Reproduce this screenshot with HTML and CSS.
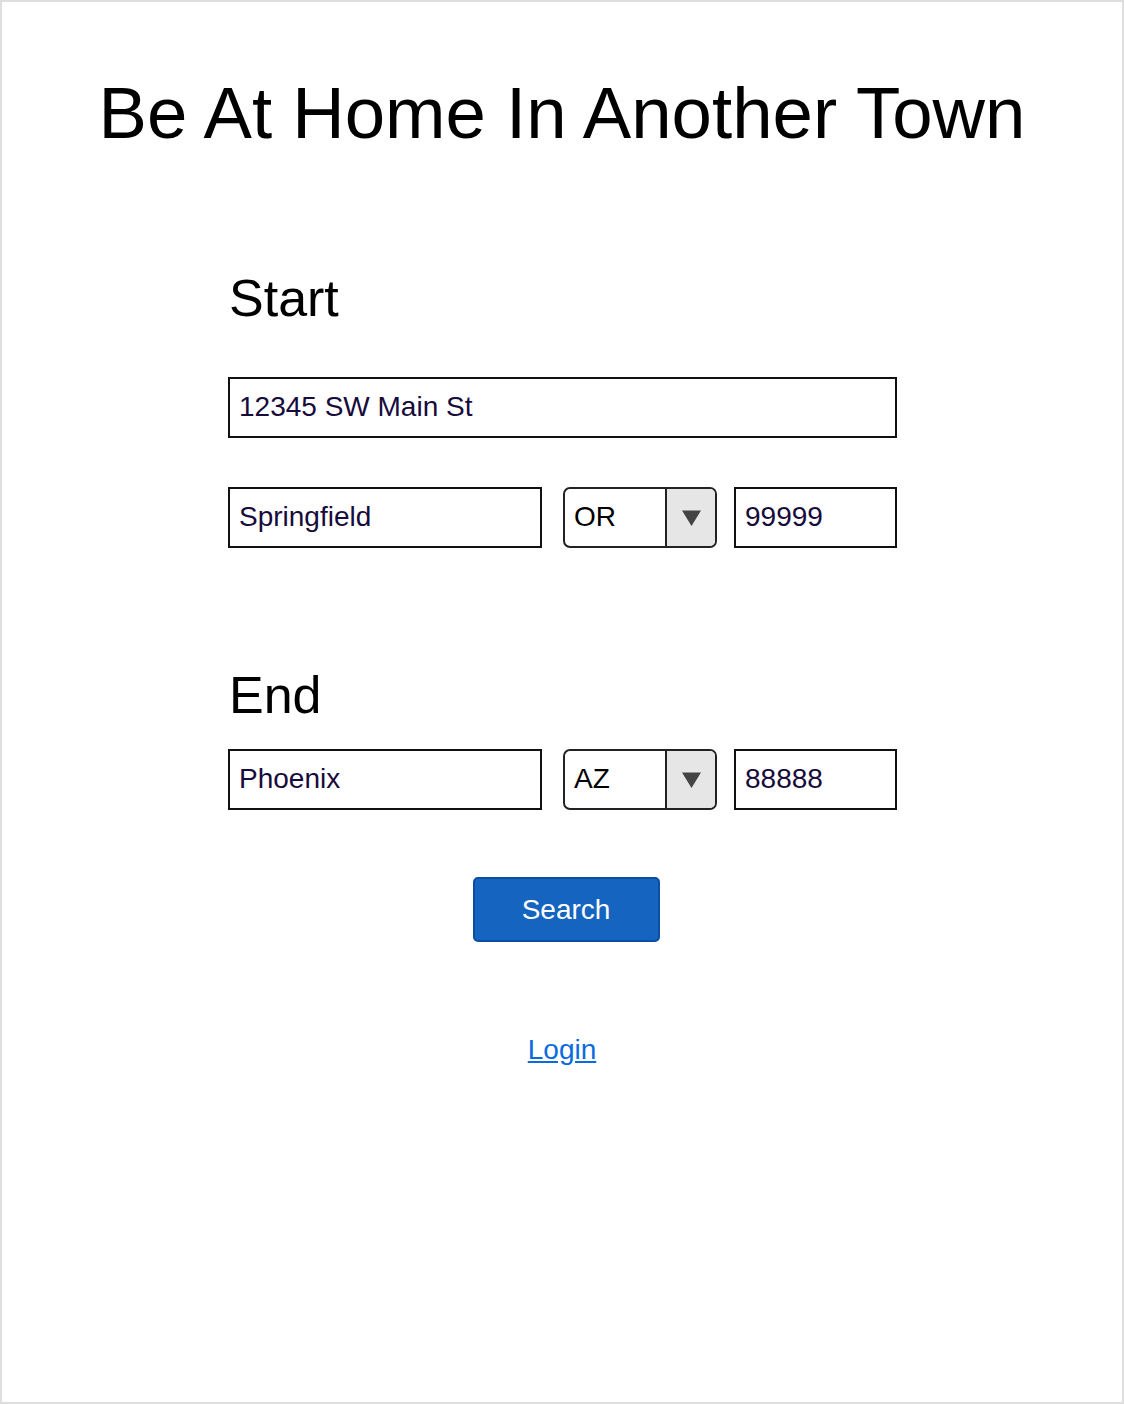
FILE: index.html
```html
<!DOCTYPE html>
<html lang="en">
<head>
<meta charset="utf-8">
<title>Be At Home In Another Town</title>
<link rel="stylesheet" href="styles.css">
</head>
<body>
<div class="page">
  <h1 class="title">Be At Home In Another Town</h1>
  <form class="form">
    <h2 class="section-title start-title">Start</h2>
    <input class="field field-full" type="text" value="12345 SW Main St">
    <div class="row row-start">
      <input class="field field-city" type="text" value="Springfield">
      <div class="select">
        <span class="select-value">OR</span>
        <span class="select-arrow"><svg width="19" height="16" viewBox="0 0 19 16"><path d="M0 0.5 H19 L9.5 16 Z" fill="#444"/></svg></span>
      </div>
      <input class="field field-zip" type="text" value="99999">
    </div>
    <h2 class="section-title end-title">End</h2>
    <div class="row">
      <input class="field field-city" type="text" value="Phoenix">
      <div class="select">
        <span class="select-value">AZ</span>
        <span class="select-arrow"><svg width="19" height="16" viewBox="0 0 19 16"><path d="M0 0.5 H19 L9.5 16 Z" fill="#444"/></svg></span>
      </div>
      <input class="field field-zip" type="text" value="88888">
    </div>
    <div class="actions">
      <button class="search-btn" type="button">Search</button>
    </div>
    <div class="login-wrap">
      <a class="login" href="#">Login</a>
    </div>
  </form>
</div>
</body>
</html>
```

FILE: styles.css
```css
* {
  box-sizing: border-box;
}

html, body {
  margin: 0;
  padding: 0;
  background: #fff;
}

body {
  font-family: "Liberation Sans", Arial, Helvetica, sans-serif;
  color: #000;
}

.page {
  width: 1124px;
  height: 1404px;
  border: 2px solid #dedede;
  overflow: hidden;
}

.title {
  margin: 74px 0 0;
  font-size: 72.6px;
  font-weight: normal;
  line-height: 73px;
  text-align: center;
  letter-spacing: 0;
}

.form {
  width: 669px;
  margin-left: 226px;
}

.section-title {
  margin: 0;
  font-size: 52px;
  font-weight: normal;
  line-height: 52px;
}

.start-title {
  margin-top: 123px;
  margin-bottom: 53px;
  padding-left: 1px;
}

.end-title {
  margin-top: 121px;
  margin-bottom: 28px;
  padding-left: 1px;
}

.field {
  display: block;
  height: 61px;
  border: 2px solid #111;
  border-radius: 0;
  padding: 0 8px 2px 9px;
  font-family: "Liberation Sans", Arial, Helvetica, sans-serif;
  font-size: 28px;
  color: #170b3b;
  background: #fff;
  outline: none;
}

.field-full {
  width: 669px;
}

.row {
  display: flex;
  align-items: stretch;
}

.row-start {
  margin-top: 49px;
}

.field-city {
  width: 314px;
}

.select {
  display: flex;
  width: 154px;
  height: 61px;
  margin-left: 21px;
  border: 2px solid #222;
  border-radius: 7px;
  overflow: hidden;
  background: #fff;
}

.select-value {
  flex: 1;
  display: flex;
  align-items: center;
  padding-left: 9px;
  padding-bottom: 2px;
  font-size: 28px;
  color: #000;
}

.select-arrow {
  width: 50px;
  display: flex;
  align-items: center;
  justify-content: center;
  background: #e6e6e6;
  border-left: 2px solid #222;
}

.field-zip {
  width: 163px;
  margin-left: 17px;
}

.actions {
  display: flex;
  justify-content: center;
  margin-top: 67px;
  padding-left: 7px;
}

.search-btn {
  width: 187px;
  height: 65px;
  border: 2px solid #0d4ea3;
  border-radius: 5px;
  background: #1565c0;
  color: #fff;
  font-family: "Liberation Sans", Arial, Helvetica, sans-serif;
  font-size: 28px;
  cursor: pointer;
}

.login-wrap {
  margin-top: 94px;
  padding-right: 1px;
  text-align: center;
  line-height: 28px;
}

.login {
  font-size: 28px;
  color: #0a6ae0;
  text-decoration: underline;
}
```
